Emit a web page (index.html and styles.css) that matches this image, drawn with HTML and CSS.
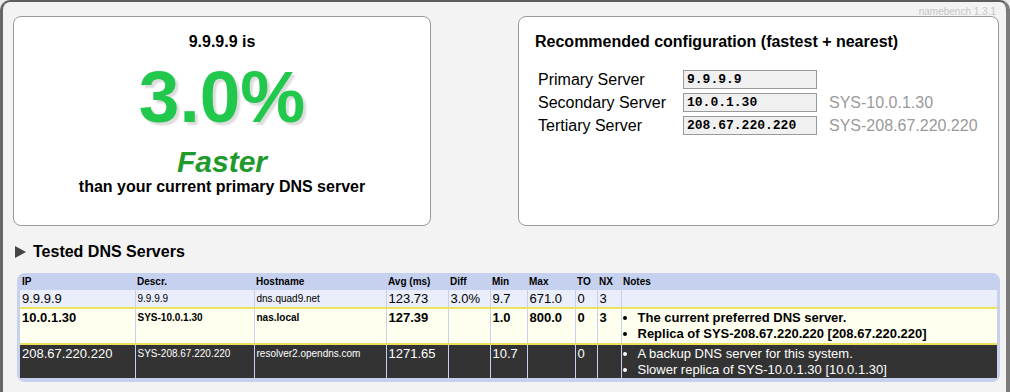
FILE: index.html
```html
<!DOCTYPE html>
<html lang="en">
<head>
    <meta charset="UTF-8">
    <title>namebench results</title>
    <link rel="stylesheet" href="styles.css">
</head>
<body>
    <div class="window">
        <div class="version">namebench 1.3.1</div>

        <div class="cards">
            <div class="card summary">
                <div class="lead">9.9.9.9 is</div>
                <div class="percent">3.0%</div>
                <div class="faster">Faster</div>
                <div class="lead">than your current primary DNS server</div>
            </div>

            <div class="card config">
                <h3>Recommended configuration (fastest + nearest)</h3>
                <div class="config-grid">
                    <span class="label">Primary Server</span>
                    <input class="server" type="text" value="9.9.9.9" readonly>
                    <span class="hint"></span>

                    <span class="label">Secondary Server</span>
                    <input class="server" type="text" value="10.0.1.30" readonly>
                    <span class="hint">SYS-10.0.1.30</span>

                    <span class="label">Tertiary Server</span>
                    <input class="server" type="text" value="208.67.220.220" readonly>
                    <span class="hint">SYS-208.67.220.220</span>
                </div>
            </div>
        </div>

        <h2 class="section-title"><span class="arrow"></span>Tested DNS Servers</h2>

        <div class="table-wrap">
            <table class="servers">
                <colgroup>
                    <col style="width:115px">
                    <col style="width:119px">
                    <col style="width:132px">
                    <col style="width:62px">
                    <col style="width:42px">
                    <col style="width:37px">
                    <col style="width:48px">
                    <col style="width:22px">
                    <col style="width:24px">
                    <col>
                </colgroup>
                <thead>
                    <tr>
                        <th>IP</th>
                        <th>Descr.</th>
                        <th>Hostname</th>
                        <th>Avg (ms)</th>
                        <th>Diff</th>
                        <th>Min</th>
                        <th>Max</th>
                        <th>TO</th>
                        <th>NX</th>
                        <th>Notes</th>
                    </tr>
                </thead>
                <tbody>
                    <tr class="fastest">
                        <td class="ip">9.9.9.9</td>
                        <td class="small">9.9.9.9</td>
                        <td class="small">dns.quad9.net</td>
                        <td>123.73</td>
                        <td>3.0%</td>
                        <td>9.7</td>
                        <td>671.0</td>
                        <td>0</td>
                        <td>3</td>
                        <td></td>
                    </tr>
                    <tr class="primary">
                        <td class="ip">10.0.1.30</td>
                        <td class="small">SYS-10.0.1.30</td>
                        <td class="small">nas.local</td>
                        <td>127.39</td>
                        <td></td>
                        <td>1.0</td>
                        <td>800.0</td>
                        <td>0</td>
                        <td>3</td>
                        <td>
                            <ul class="notes">
                                <li>The current preferred DNS server.</li>
                                <li>Replica of SYS-208.67.220.220 [208.67.220.220]</li>
                            </ul>
                        </td>
                    </tr>
                    <tr class="system">
                        <td class="ip">208.67.220.220</td>
                        <td class="small">SYS-208.67.220.220</td>
                        <td class="small">resolver2.opendns.com</td>
                        <td>1271.65</td>
                        <td></td>
                        <td>10.7</td>
                        <td></td>
                        <td>0</td>
                        <td></td>
                        <td>
                            <ul class="notes">
                                <li>A backup DNS server for this system.</li>
                                <li>Slower replica of SYS-10.0.1.30 [10.0.1.30]</li>
                            </ul>
                        </td>
                    </tr>
                </tbody>
            </table>
        </div>
    </div>
</body>
</html>
```

FILE: styles.css
```css
body {
    margin: 0;
    background-color: #ececec;
    font-family: "Liberation Sans", Arial, Helvetica, sans-serif;
    color: #000;
}

.window {
    position: relative;
    box-sizing: border-box;
    min-height: 392px;
    padding: 14px 0 0 10px;
    background-color: #f3f3f3;
    border-top: 2px solid #5e5e5e;
    border-left: 3px solid #666;
    border-right: 4px solid #7a7a7a;
    border-radius: 10px 10px 0 0;
}

.version {
    position: absolute;
    top: 4px;
    right: 10px;
    font-size: 10px;
    color: #c6c6c6;
}

/* top cards */

.cards {
    display: flex;
    gap: 87px;
}

.card {
    box-sizing: border-box;
    height: 210px;
    background-color: #fff;
    border: 1px solid #9a9a9a;
    border-radius: 8px;
}

.summary {
    width: 418px;
    padding-top: 16px;
    text-align: center;
}

.lead {
    font-size: 16px;
    font-weight: bold;
    line-height: 18px;
}

.percent {
    margin-top: 6px;
    font-size: 73px;
    font-weight: bold;
    line-height: 80px;
    color: #21c84b;
    text-shadow: 3px 3px 2px #dcdcdc;
}

.faster {
    margin-top: 8px;
    font-size: 30px;
    font-weight: bold;
    font-style: italic;
    line-height: 33px;
    color: #1f9a2c;
}

.config {
    width: 481px;
    padding: 15px 0 0 16px;
}

.config h3 {
    margin: 0;
    font-size: 16px;
    line-height: 20px;
}

.config-grid {
    display: grid;
    grid-template-columns: 133px 134px auto;
    column-gap: 12px;
    row-gap: 4px;
    align-items: center;
    margin: 18px 0 0 3px;
}

.label {
    font-size: 16px;
}

.server {
    box-sizing: border-box;
    width: 134px;
    height: 19px;
    margin: 0;
    padding: 0 3px;
    border: 1px solid #9a9a9a;
    background-color: #f0f0f0;
    font-family: "Liberation Mono", "Courier New", monospace;
    font-size: 13px;
    font-weight: bold;
    color: #000;
}

.hint {
    font-size: 16px;
    color: #9a9a9a;
}

/* tested servers */

.section-title {
    display: flex;
    align-items: center;
    gap: 7px;
    margin: 16px 0 0 2px;
    font-size: 16px;
    line-height: 20px;
}

.arrow {
    width: 0;
    height: 0;
    border-left: 11px solid #454545;
    border-top: 6px solid transparent;
    border-bottom: 6px solid transparent;
}

.table-wrap {
    width: 983px;
    box-sizing: border-box;
    margin: 11px 0 0 4px;
    padding: 0 3px 4px 3px;
    background-color: #c6d0ef;
    border-radius: 8px;
}

.servers {
    width: 977px;
    table-layout: fixed;
    border-collapse: collapse;
}

.servers th {
    height: 17px;
    padding: 0 2px;
    font-size: 10px;
    font-weight: bold;
    text-align: left;
    vertical-align: middle;
}

.servers td {
    padding: 1px 2px 0 2px;
    font-size: 13px;
    line-height: 16px;
    vertical-align: top;
    border-right: 1px solid #c6d0ef;
    white-space: nowrap;
}

.servers td:last-child {
    border-right: none;
}

.servers td.ip {
    font-size: 13px;
}

.servers td.small {
    font-size: 10px;
}

.servers tr.fastest {
    height: 18px;
    background-color: #e9eefa;
}

.servers tr.primary {
    height: 36px;
    background-color: #fffff0;
    border-top: 2px solid #ece15c;
    font-weight: bold;
}

.servers tr.system {
    height: 34px;
    background-color: #333;
    border-top: 2px solid #ece15c;
    color: #fff;
}

.notes {
    margin: 0;
    padding-left: 14px;
    font-size: 13px;
}
```
